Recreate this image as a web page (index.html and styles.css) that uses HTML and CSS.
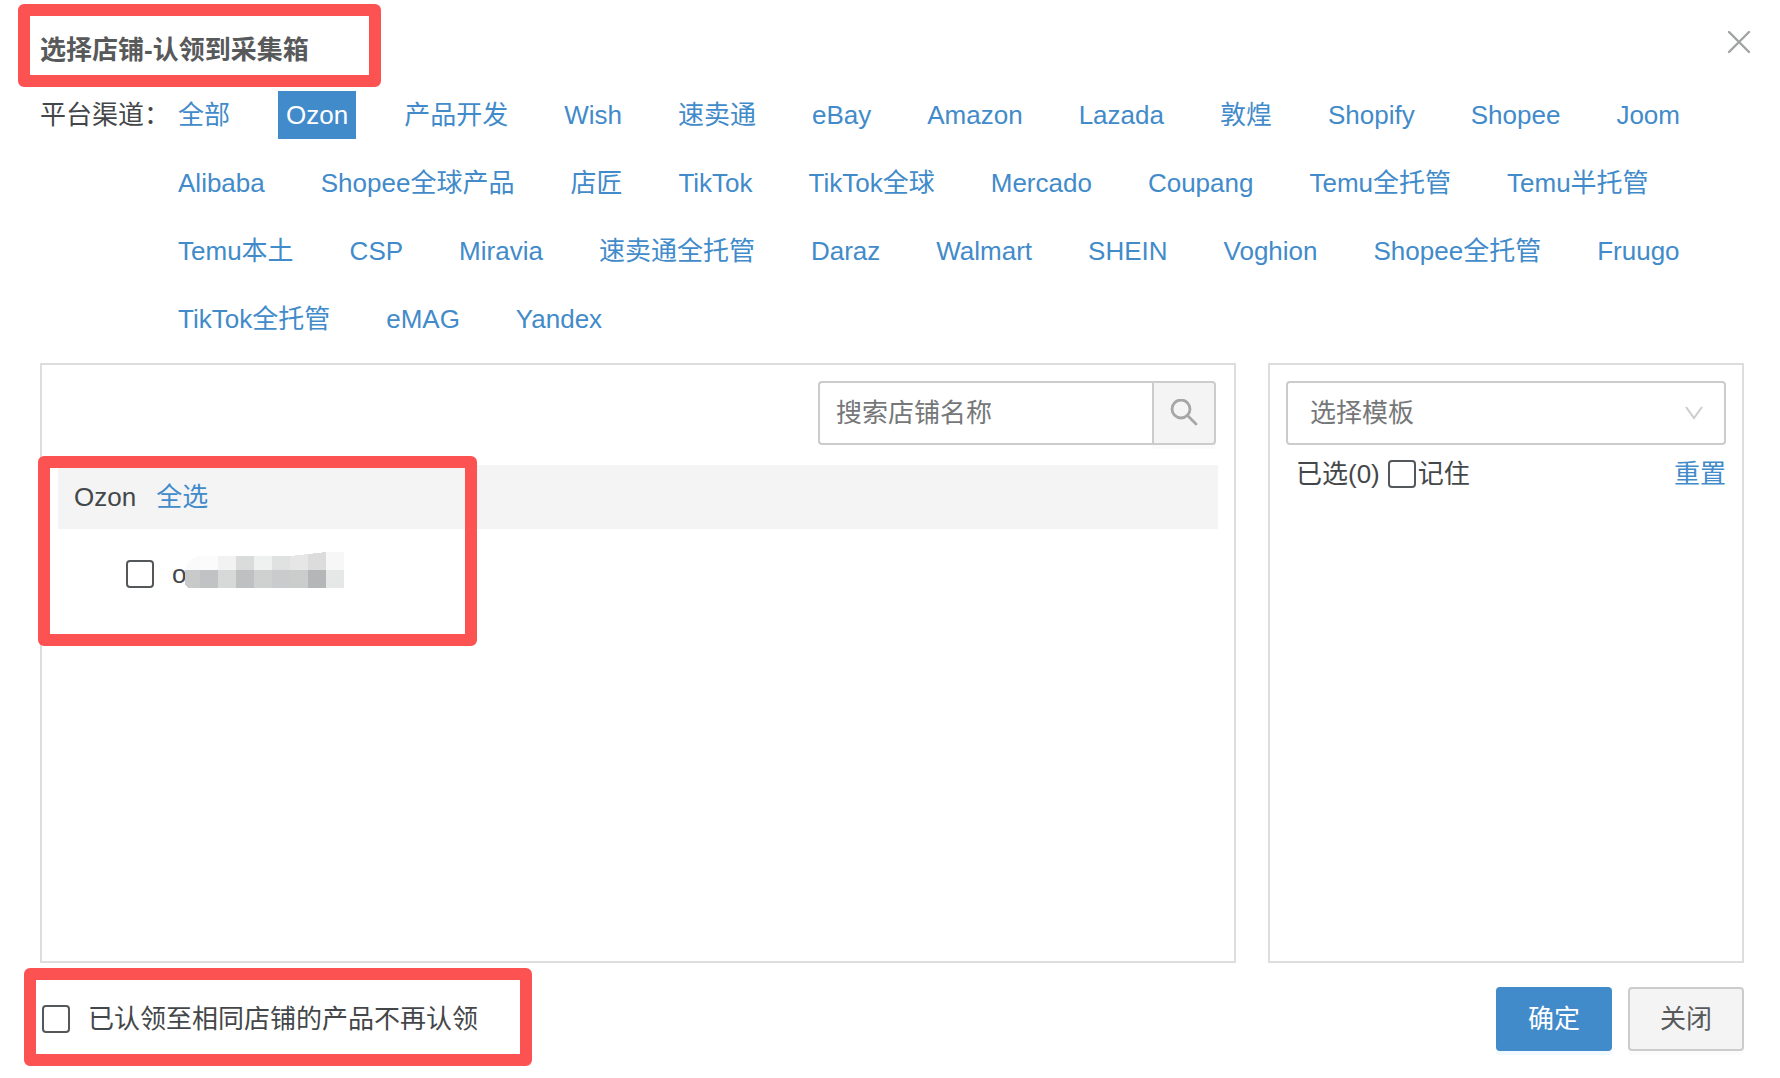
FILE: index.html
```html
<!DOCTYPE html>
<html lang="zh-CN">
<head>
    <meta charset="UTF-8">
    <meta name="viewport" content="width=device-width, initial-scale=1.0">
    <title>选择店铺-认领到采集箱</title>
    <link rel="stylesheet" href="styles.css">
</head>
<body>
    <div class="dialog">
        <header class="dialog-header">
            <h2>选择店铺-认领到采集箱</h2>
            <button type="button" class="close" aria-label="关闭窗口">
                <svg width="24" height="24" viewBox="0 0 24 24" fill="none" stroke="#a0a2a3" stroke-width="2.4" stroke-linecap="round">
                    <path d="M2 2L22 22M22 2L2 22"/>
                </svg>
            </button>
            <span class="mark mark-title"></span>
        </header>

        <nav class="channels">
            <span class="channels-label">平台渠道：</span>
            <div class="channels-list">
                <a href="#">全部</a>
                <a href="#" class="active">Ozon</a>
                <a href="#">产品开发</a>
                <a href="#">Wish</a>
                <a href="#">速卖通</a>
                <a href="#">eBay</a>
                <a href="#">Amazon</a>
                <a href="#">Lazada</a>
                <a href="#">敦煌</a>
                <a href="#">Shopify</a>
                <a href="#">Shopee</a>
                <a href="#">Joom</a>
                <a href="#">Alibaba</a>
                <a href="#">Shopee全球产品</a>
                <a href="#">店匠</a>
                <a href="#">TikTok</a>
                <a href="#">TikTok全球</a>
                <a href="#">Mercado</a>
                <a href="#">Coupang</a>
                <a href="#">Temu全托管</a>
                <a href="#">Temu半托管</a>
                <a href="#">Temu本土</a>
                <a href="#">CSP</a>
                <a href="#">Miravia</a>
                <a href="#">速卖通全托管</a>
                <a href="#">Daraz</a>
                <a href="#">Walmart</a>
                <a href="#">SHEIN</a>
                <a href="#">Voghion</a>
                <a href="#">Shopee全托管</a>
                <a href="#">Fruugo</a>
                <a href="#">TikTok全托管</a>
                <a href="#">eMAG</a>
                <a href="#">Yandex</a>
            </div>
        </nav>

        <main class="panels">
            <section class="panel">
                <form class="search">
                    <input type="text" placeholder="搜索店铺名称" aria-label="搜索店铺名称">
                    <button type="button" aria-label="搜索">
                        <svg width="28" height="28" viewBox="0 0 28 28" fill="none" stroke="#a6a6a6" stroke-width="2.8" stroke-linecap="round">
                            <circle cx="11" cy="10" r="9"/>
                            <path d="M17.5 16.5L26 25"/>
                        </svg>
                    </button>
                </form>
                <div class="shops">
                    <div class="shops-title">
                        <span>Ozon</span>
                        <a href="#">全选</a>
                    </div>
                    <label class="shop">
                        <input type="checkbox">
                        <span class="shop-name">o</span>
                        <!-- masked shop name -->
                        <svg class="mask" width="159" height="36" viewBox="0 0 159 36" shape-rendering="crispEdges">
                            <path fill="#fafafa" d="M0 18Q2 6 15 4V18z"/>
                            <path fill="#fbfbfb" d="M15 4h18v14H15z"/>
                            <path fill="#f2f2f2" d="M33 4h18v14H33z"/>
                            <path fill="#dadcdb" d="M51 4h18v14H51z"/>
                            <path fill="#eff1f0" d="M69 4h18v14H69z"/>
                            <path fill="#e0e2e1" d="M87 4h18v14H87z"/>
                            <path fill="#e6e6e6" d="M105 4L123 2V18h-18z"/>
                            <path fill="#dcdcdd" d="M123 2L141 0V18h-18z"/>
                            <path fill="#f7f7f7" d="M141 0h18v18h-18z"/>
                            <path fill="#c8caca" d="M0 18h15v18H3L0 32z"/>
                            <path fill="#c1c2c4" d="M15 18h18v18H15z"/>
                            <path fill="#d7d9d8" d="M33 18h18v18H33z"/>
                            <path fill="#bfc0c2" d="M51 18h18v18H51z"/>
                            <path fill="#cfd1d1" d="M69 18h18v18H69z"/>
                            <path fill="#cacbcd" d="M87 18h18v18H87z"/>
                            <path fill="#cbcdcd" d="M105 18h18v18h-18z"/>
                            <path fill="#b5b6b8" d="M123 18h18v18h-18z"/>
                            <path fill="#e6e8e7" d="M141 18h18v18h-18z"/>
                        </svg>
                    </label>
                    <span class="mark mark-shops"></span>
                </div>
            </section>

            <section class="panel">
                <div class="template">
                    <select aria-label="选择模板">
                        <option>选择模板</option>
                    </select>
                    <svg class="arrow" width="18" height="14" viewBox="0 0 18 14" fill="none" stroke="#ccc" stroke-width="2">
                        <path d="M1 1L9 12L17 1"/>
                    </svg>
                </div>
                <div class="selected">
                    <span>已选(0)</span>
                    <label><input type="checkbox">记住</label>
                    <a href="#">重置</a>
                </div>
            </section>
        </main>

        <footer class="dialog-footer">
            <label class="skip">
                <input type="checkbox">
                <span>已认领至相同店铺的产品不再认领</span>
            </label>
            <button type="button" class="btn btn-primary">确定</button>
            <button type="button" class="btn">关闭</button>
            <span class="mark mark-skip"></span>
        </footer>
    </div>
</body>
</html>
```
FILE: styles.css
```css
* {
    box-sizing: border-box;
}
body {
    margin: 0;
    background-color: #fff;
    color: #444749;
    font-family: "Liberation Sans", "Noto Sans CJK SC", sans-serif;
    font-size: 26px;
    line-height: 40px;
}
input, select, button {
    font: inherit;
    color: inherit;
}
button {
    padding: 0;
    cursor: pointer;
}
a {
    color: #428bca;
    text-decoration: none;
}
.dialog {
    display: flex;
    flex-direction: column;
    min-height: 100vh;
    padding: 0 36px 27px 40px;
}

/* header */
.dialog-header {
    position: relative;
    display: flex;
    justify-content: space-between;
    align-items: flex-start;
    padding: 30px 0 11px;
}
h2 {
    margin: 0;
    font-size: 26px;
    color: #58595b;
}
.close {
    display: flex;
    margin-right: -7px;
    border: none;
    background: none;
}

/* platform links */
.channels {
    display: flex;
    margin-bottom: 10px;
    line-height: 68px;
}
.channels-label {
    flex: none;
}
.channels-list {
    display: flex;
    flex-wrap: wrap;
    column-gap: 40px;
}
.channels-list a {
    margin: 10px 0;
    padding: 0 8px;
    line-height: 48px;
}
.channels-list .active {
    background-color: #428bca;
    color: #fff;
}

/* panels */
.panels {
    flex: 1;
    display: grid;
    grid-template-columns: minmax(0, 1fr) 476px;
    gap: 32px;
}
.panel {
    padding: 16px;
    border: 2px solid #ddd;
}
.search {
    display: flex;
    width: 398px;
    height: 64px;
    margin: 0 2px 20px auto;
}
.search input {
    flex: 1;
    min-width: 0;
    padding: 0 16px;
    border: 2px solid #ccc;
    border-right: none;
    border-radius: 4px 0 0 4px;
    outline: none;
}
.search button {
    display: flex;
    align-items: center;
    justify-content: center;
    width: 64px;
    border: 2px solid #ccc;
    border-radius: 0 4px 4px 0;
    background-color: #f4f4f4;
    box-shadow: 0 4px 0 #fbfbfb;
}
::placeholder {
    color: #757779;
    opacity: 1;
}
input[type="checkbox"] {
    appearance: none;
    flex: none;
    width: 28px;
    height: 28px;
    margin: 0;
    border: 2px solid #54585a;
    border-radius: 4px;
    background-color: #fff;
}
input[type="checkbox"]:checked {
    background-color: #428bca;
}
.shops {
    position: relative;
}
.shops-title {
    display: flex;
    gap: 20px;
    padding: 12px 16px;
    background-color: #f4f4f4;
}
.shop {
    display: flex;
    align-items: center;
    margin: 25px 0 0 68px;
}
.shop-name {
    margin-left: 18px;
}
.mask {
    margin: -8px 0 0 -1px;
}

.template {
    position: relative;
    margin-bottom: 9px;
}
.template select {
    appearance: none;
    display: block;
    width: 100%;
    height: 64px;
    padding: 0 22px;
    border: 2px solid #ccc;
    border-radius: 4px;
    background-color: #fff;
    color: #757779;
    outline: none;
}
.arrow {
    position: absolute;
    top: 25px;
    right: 23px;
    pointer-events: none;
}
.selected {
    display: flex;
    gap: 8px;
    padding-left: 10px;
}
.selected label {
    display: flex;
    align-items: center;
    gap: 2px;
}
.selected a {
    margin-left: auto;
}

/* footer */
.dialog-footer {
    position: relative;
    display: flex;
    align-items: center;
    gap: 16px;
    margin-top: 24px;
}
.skip {
    display: flex;
    align-items: center;
    gap: 18px;
    margin: 0 auto 0 2px;
}
.btn {
    width: 116px;
    height: 64px;
    border: 2px solid #ccc;
    border-radius: 4px;
    background-color: #f4f4f4;
    color: #58595b;
    box-shadow: 0 4px 0 #fbfbfb;
}
.btn-primary {
    border-color: #428bca;
    background-color: #428bca;
    color: #fff;
    box-shadow: 0 4px 0 #f0f9ff;
}

/* red highlight frames */
.mark {
    position: absolute;
    border: 12px solid #fc5252;
    border-radius: 6px;
    pointer-events: none;
}
.mark-title {
    top: 4px;
    left: -22px;
    width: 363px;
    height: 83px;
}
.mark-shops {
    top: -9px;
    left: -20px;
    width: 439px;
    height: 190px;
}
.mark-skip {
    top: -19px;
    left: -16px;
    width: 508px;
    height: 98px;
}
```
